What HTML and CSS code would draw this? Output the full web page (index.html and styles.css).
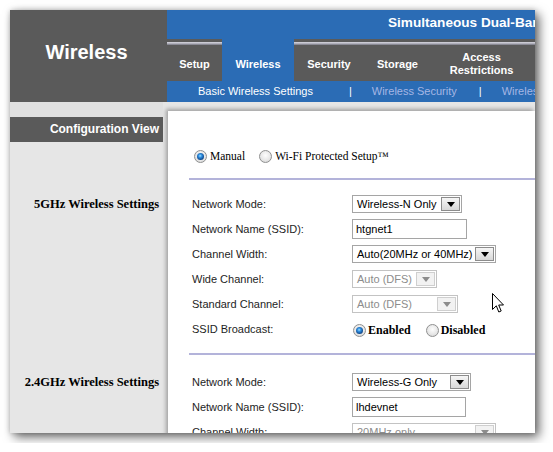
FILE: index.html
```html
<!DOCTYPE html>
<html>
<head>
<meta charset="utf-8">
<title>Wireless</title>
<link rel="stylesheet" href="styles.css">
</head>
<body>
<div class="frame">
  <header class="header">
    <div class="title">Wireless</div>
    <div class="topright">
      <div class="banner">Simultaneous Dual-Band Wireless-N Router</div>
      <nav class="tabs">
        <div class="tab t-setup">Setup</div>
        <div class="tab t-wireless active">Wireless</div>
        <div class="tab t-security">Security</div>
        <div class="tab t-storage">Storage</div>
        <div class="tab t-access">Access<br>Restrictions</div>
      </nav>
      <div class="subnav">
        <span class="sub">Basic Wireless Settings</span>
        <span class="sep first">|</span>
        <span class="sub link">Wireless Security</span>
        <span class="sep">|</span>
        <span class="sub link">Wireless MAC Filter</span>
      </div>
    </div>
  </header>

  <div class="body">
    <div class="panel-bg"></div>

    <div class="side top r1"><div class="cfg">Configuration View</div></div>
    <div class="main top r1"></div>

    <div class="main wps r2">
      <span class="radio on"></span><span class="rtext">Manual</span>
      <span class="radio second"></span><span class="rtext">Wi-Fi Protected Setup™</span>
    </div>

    <div class="main hrrow r3"><div class="hr"></div></div>

    <div class="side seclabel s5 r4">5GHz Wireless Settings</div>
    <div class="main sec s5 r4">
      <div class="row"><span class="lbl">Network Mode:</span>
        <div class="sel w110"><span class="val">Wireless-N Only</span><span class="btn"></span></div></div>
      <div class="row"><span class="lbl">Network Name (SSID):</span>
        <div class="inp w115">htgnet1</div></div>
      <div class="row"><span class="lbl">Channel Width:</span>
        <div class="sel w144"><span class="val">Auto(20MHz or 40MHz)</span><span class="btn"></span></div></div>
      <div class="row"><span class="lbl">Wide Channel:</span>
        <div class="sel dis w85"><span class="val">Auto (DFS)</span><span class="btn"></span></div></div>
      <div class="row"><span class="lbl">Standard Channel:</span>
        <div class="sel dis w106"><span class="val">Auto (DFS)</span><span class="btn"></span></div></div>
      <div class="row"><span class="lbl">SSID Broadcast:</span>
        <div class="bcast">
          <span class="radio on"></span><span class="btext">Enabled</span>
          <span class="radio second"></span><span class="btext">Disabled</span>
        </div></div>
    </div>

    <div class="main hrrow two r5"><div class="hr"></div></div>

    <div class="side seclabel s24 r6">2.4GHz Wireless Settings</div>
    <div class="main sec s24 r6">
      <div class="row"><span class="lbl">Network Mode:</span>
        <div class="sel w119"><span class="val">Wireless-G Only</span><span class="btn"></span></div></div>
      <div class="row"><span class="lbl">Network Name (SSID):</span>
        <div class="inp w114">lhdevnet</div></div>
      <div class="row"><span class="lbl">Channel Width:</span>
        <div class="sel dis w144"><span class="val">20MHz only</span><span class="btn"></span></div></div>
    </div>
  </div>

  <svg class="cursor" width="12" height="21" viewBox="0 0 12 21">
    <path d="M0.5 0.5 L0.5 16.5 L4.3 12.8 L6.8 19 L9.2 18 L6.7 12 L11.5 12 Z" fill="#fff" stroke="#000" stroke-width="1" stroke-linejoin="miter"/>
  </svg>
</div>
</body>
</html>
```

FILE: styles.css
```css
* { box-sizing: border-box; }
html, body { margin: 0; padding: 0; background: #fff; }
body { font-family: "Liberation Sans", Arial, sans-serif; }

.frame {
  position: relative;
  width: 525px;
  height: 423px;
  margin: 10px;
  overflow: hidden;
  background: #e6e6e6;
  box-shadow: 4px 4px 10px rgba(0,0,0,.6), 0 0 5px rgba(0,0,0,.18);
}

/* header */
.header { display: grid; grid-template-columns: 157px 1fr; height: 92px; }
.title {
  background: #5a5a5a; color: #fff; font-weight: bold; font-size: 20px;
  display: flex; align-items: center; justify-content: center; padding-bottom: 8px; padding-right: 4px;
}
.topright { display: flex; flex-direction: column; min-width: 0; }
.banner {
  height: 29px; background: #2b6cb5; color: #fff; font-weight: bold; font-size: 13.6px;
  line-height: 25px; padding-left: 221px; white-space: nowrap; overflow: hidden;
}
.tabs {
  height: 42px; display: flex;
  background: linear-gradient(#5a5a5a 0 3px, #d8d8e0 3px, #a4a4b0 5px, #70707a 6px, #5a5a5a 6px);
}
.tab {
  flex: none; color: #fff; font-weight: bold; font-size: 11px; line-height: 13px;
  text-align: center; display: flex; align-items: center; justify-content: center; padding-top: 8px;
}
.tab.active { background: #2b6cb5; }
.t-setup { width: 55px; }
.t-wireless { width: 72px; }
.t-security { width: 70px; }
.t-storage { width: 67px; }
.t-access { width: 101px; }

.subnav {
  height: 21px; background: #2b6cb5; font-size: 11px; line-height: 21px; color: #fff;
  display: flex; white-space: nowrap; padding-left: 31px; overflow: hidden;
}
.sub, .sep { flex: none; }
.sub.link { color: #a6b6e4; }
.sep { margin: 0 20px 0 22px; }
.sep.first { margin-left: 36px; }

/* body */
.body { display: grid; grid-template-columns: 153px 1fr; }
.panel-bg {
  grid-column: 2; grid-row: 1 / 7;
  margin: 9px 0 0 5px; background: #fff;
  box-shadow: -2px -2px 4px rgba(0,0,0,.3);
}
.side { grid-column: 1; }
.main { grid-column: 2; min-width: 0; position: relative; }
.r1 { grid-row: 1; }
.r2 { grid-row: 2; }
.r3 { grid-row: 3; }
.r4 { grid-row: 4; }
.r5 { grid-row: 5; }
.r6 { grid-row: 6; }

.side.top { height: 40px; padding-top: 15px; background: linear-gradient(#e0e0e0, #e0e0e0) top / 100% 15px no-repeat; }
.cfg {
  height: 25px; background: #5a5a5a; color: #fff; font-weight: bold; font-size: 12px;
  line-height: 25px; text-align: right; padding-right: 4px;
}
.main.top { height: 40px; }

.main.wps {
  height: 28px; display: flex; align-items: center; padding-left: 31px;
  font-family: "Liberation Serif", "Times New Roman", serif; font-size: 11.5px; color: #000;
}
.rtext { margin-left: 3px; }
.radio.second { margin-left: 14px; }

.radio {
  position: relative; flex: none; display: inline-block; width: 13px; height: 13px; border-radius: 50%;
  border: 1px solid #8f9090;
  background: radial-gradient(circle at 50% 40%, #fdfdfd 0, #e8e8e8 55%, #cfcfcf 100%);
}
.radio.on::after {
  content: ""; position: absolute; left: 2px; top: 2px; width: 7px; height: 7px; border-radius: 50%;
  background: radial-gradient(circle at 45% 40%, #9fe0ff 0, #2f8ee0 30%, #134f94 65%, #0b2d5a 100%);
}

.hrrow { padding: 8px 0 0 26px; }
.hrrow.two { padding-top: 11.5px; }
.hr { height: 2px; background: #b3b3da; }

.seclabel {
  font-family: "Liberation Serif", "Times New Roman", serif; font-weight: bold; font-size: 12.5px;
  color: #000; text-align: right; padding-right: 4px; line-height: 25px;
}
.seclabel.s5, .sec.s5 { padding-top: 11.5px; }
.seclabel.s24, .sec.s24 { padding-top: 14.5px; }

.row {
  display: grid; grid-template-columns: 160px auto; height: 25px; align-items: center;
  padding-left: 29px; font-size: 11px; color: #1e1e1e; justify-items: start;
}
.lbl { white-space: nowrap; }

.sel {
  display: flex; height: 18px; border: 1px solid #a5a5a5; background: #fff;
  font-size: 11px; color: #000;
}
.sel .val { flex: 1; padding-left: 4px; line-height: 16px; white-space: nowrap; overflow: hidden; }
.sel .btn {
  flex: none; width: 19px; margin: 1px; border: 1px solid #8c8c8c;
  background: linear-gradient(#f6f6f6, #d8d8d8);
  display: flex; align-items: center; justify-content: center;
}
.sel .btn::before {
  content: ""; border-left: 4px solid transparent; border-right: 4px solid transparent;
  border-top: 5px solid #000; margin-top: 1px;
}
.sel.dis { border-color: #c3c3c3; color: #8c8c8c; }
.sel.dis .btn { border-color: #cfcfcf; background: #f2f2f2; }
.sel.dis .btn::before { border-top-color: #8c8c8c; }

.inp {
  height: 20px; border: 1px solid #a5a5a5; background: #fff; font-size: 11px; color: #000;
  line-height: 18px; padding-left: 3px;
}
.w85 { width: 85px; }
.w106 { width: 106px; }
.w110 { width: 110px; }
.w114 { width: 114px; }
.w115 { width: 115px; }
.w119 { width: 119px; }
.w144 { width: 144px; }

.bcast {
  display: flex; align-items: center; padding-left: 1px; padding-top: 2px;
  font-family: "Liberation Serif", "Times New Roman", serif; font-weight: bold; font-size: 12px; color: #000;
}
.btext { margin-left: 2px; }
.bcast .radio.second { margin-left: 15px; }

.cursor { position: absolute; left: 482px; top: 283px; }
```
